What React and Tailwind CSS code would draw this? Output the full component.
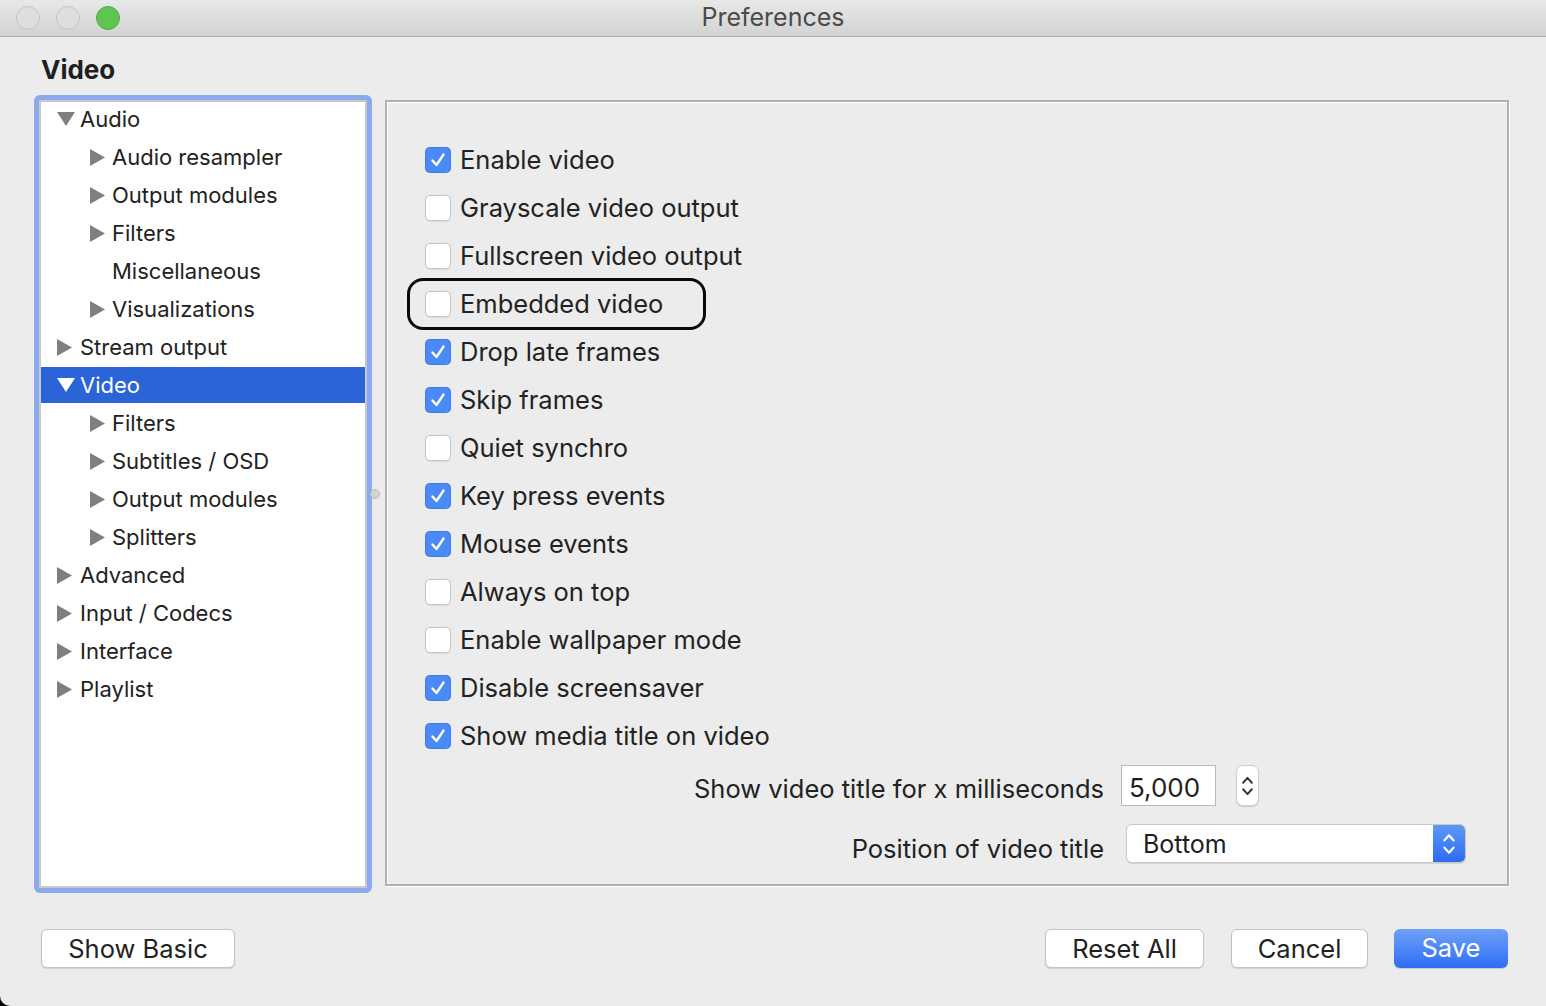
import React from 'react';

const treeItems = [
  { label: 'Audio', level: 0, arrow: 'down' },
  { label: 'Audio resampler', level: 1, arrow: 'right' },
  { label: 'Output modules', level: 1, arrow: 'right' },
  { label: 'Filters', level: 1, arrow: 'right' },
  { label: 'Miscellaneous', level: 1, arrow: null },
  { label: 'Visualizations', level: 1, arrow: 'right' },
  { label: 'Stream output', level: 0, arrow: 'right' },
  { label: 'Video', level: 0, arrow: 'down', selected: true },
  { label: 'Filters', level: 1, arrow: 'right' },
  { label: 'Subtitles / OSD', level: 1, arrow: 'right' },
  { label: 'Output modules', level: 1, arrow: 'right' },
  { label: 'Splitters', level: 1, arrow: 'right' },
  { label: 'Advanced', level: 0, arrow: 'right' },
  { label: 'Input / Codecs', level: 0, arrow: 'right' },
  { label: 'Interface', level: 0, arrow: 'right' },
  { label: 'Playlist', level: 0, arrow: 'right' },
];

const options = [
  { label: 'Enable video', checked: true },
  { label: 'Grayscale video output', checked: false },
  { label: 'Fullscreen video output', checked: false },
  { label: 'Embedded video', checked: false, highlight: true },
  { label: 'Drop late frames', checked: true },
  { label: 'Skip frames', checked: true },
  { label: 'Quiet synchro', checked: false },
  { label: 'Key press events', checked: true },
  { label: 'Mouse events', checked: true },
  { label: 'Always on top', checked: false },
  { label: 'Enable wallpaper mode', checked: false },
  { label: 'Disable screensaver', checked: true },
  { label: 'Show media title on video', checked: true },
];

function Arrow({ dir, selected }) {
  const fill = selected ? '#ffffff' : '#7f7f7f';
  if (dir === 'down') {
    return (
      <svg width="18" height="14" viewBox="0 0 18 14" className="shrink-0">
        <polygon points="0,0 18,0 9,14" fill={fill} />
      </svg>
    );
  }
  return (
    <svg width="15" height="17" viewBox="0 0 15 17" className="shrink-0">
      <polygon points="0,0 15,8.5 0,17" fill={fill} />
    </svg>
  );
}

function Checkbox({ checked }) {
  if (checked) {
    return (
      <div className="w-[26px] h-[26px] rounded-[5px] bg-[#4a8af6] flex items-center justify-center shrink-0 shadow-[inset_0_0_0_1px_rgba(40,100,230,0.35)]">
        <svg width="18" height="18" viewBox="0 0 18 18">
          <polyline points="3.5,9.5 7.5,14 14.5,3.5" fill="none" stroke="#ffffff" strokeWidth="2.4" strokeLinecap="round" strokeLinejoin="round" />
        </svg>
      </div>
    );
  }
  return <div className="w-[26px] h-[26px] rounded-[5px] bg-white border border-[#c6c6c6] shrink-0 shadow-[0_0.5px_1px_rgba(0,0,0,0.08)]" />;
}

function Chevrons({ color, w = 12, h = 24 }) {
  return (
    <svg width={w} height={h} viewBox="0 0 12 24">
      <polyline points="2,9 6,4.5 10,9" fill="none" stroke={color} strokeWidth="1.8" strokeLinecap="round" strokeLinejoin="round" />
      <polyline points="2,15 6,19.5 10,15" fill="none" stroke={color} strokeWidth="1.8" strokeLinecap="round" strokeLinejoin="round" />
    </svg>
  );
}

function PushButton({ children, className = '' }) {
  return (
    <button className={`h-[39px] rounded-[6px] bg-white border border-[#c3c3c3] shadow-[0_1px_1px_rgba(0,0,0,0.12)] text-[25.5px] text-[#222] ${className}`}>
      {children}
    </button>
  );
}

export default function App() {
  return (
    <div className="w-[1546px] h-[1006px] bg-black overflow-hidden" style={{ fontFamily: 'Inter, "Noto Sans", sans-serif' }}>
      <div className="w-full h-full bg-[#ececec] rounded-bl-[10px] flex flex-col">
        {/* title bar */}
        <div className="h-[37px] shrink-0 relative flex items-center bg-gradient-to-b from-[#e8e8e8] to-[#d3d3d3] border-b border-[#a9a9a9]">
          <div className="flex items-center gap-[16px] pl-[16px]">
            <div className="w-[24px] h-[24px] rounded-full bg-[#dedede] border border-[#c4c4c4]" />
            <div className="w-[24px] h-[24px] rounded-full bg-[#dedede] border border-[#c4c4c4]" />
            <div className="w-[24px] h-[24px] rounded-full bg-[#5ec552] border border-[#4fae44]" />
          </div>
          <div className="absolute inset-0 flex items-center justify-center text-[25px] text-[#4b4b4b] pointer-events-none">
            Preferences
          </div>
        </div>

        {/* heading */}
        <div className="mt-[17px] pl-[41px] h-[32px] leading-[32px] text-[26px] font-bold text-[#1f1f1f]">Video</div>

        {/* main */}
        <div className="flex mt-[9px] pl-[34px]">
          {/* tree */}
          <div className="w-[338px] h-[798px] p-[5px] bg-[#8aaaed] rounded-[6px] shrink-0">
            <div className="w-full h-full bg-white border-2 border-[#c8c8c8] flex flex-col gap-[2px] overflow-hidden">
              {treeItems.map((item, i) => (
                <div
                  key={i}
                  className={`h-[36px] shrink-0 flex items-center text-[22px] leading-none ${item.selected ? 'bg-[#2a64d7] text-white' : 'text-[#222]'} ${i === 0 ? '-mt-[1px]' : ''}`}
                >
                  <div className={`flex items-center ${item.level === 0 ? 'pl-[16px] w-[39px]' : 'pl-[49px] w-[71px]'} shrink-0`}>
                    {item.arrow && <Arrow dir={item.arrow} selected={item.selected} />}
                  </div>
                  <span>{item.label}</span>
                </div>
              ))}
            </div>
          </div>

          {/* splitter handle */}
          <div className="w-[13px] shrink-0 flex items-center">
            <div className="w-[10px] h-[10px] -ml-[2px] rounded-full bg-[#d4d4d4] border border-[#bdbdbd]" />
          </div>

          {/* options panel */}
          <div className="w-[1124px] h-[786px] mt-[5px] border-2 border-[#b1b1b1] shadow-[inset_1px_1px_0_#ffffff,1px_1px_0_#ffffff] overflow-hidden">
            <div className="pt-[34px] pl-[38px] flex flex-col">
              {options.map((opt, i) =>
                opt.highlight ? (
                  <div key={i} className="h-[52px] shrink-0 -my-[2px] -ml-[18px] pl-[15px] w-[299px] border-[3px] border-[#0a0a0a] rounded-[16px] flex items-center gap-[9px] text-[25.5px] text-[#222]">
                    <Checkbox checked={opt.checked} />
                    <span>{opt.label}</span>
                  </div>
                ) : (
                  <div key={i} className="h-[48px] shrink-0 flex items-center gap-[9px] text-[25.5px] text-[#222]">
                    <Checkbox checked={opt.checked} />
                    <span>{opt.label}</span>
                  </div>
                )
              )}
            </div>

            <div className="flex items-start mt-[5px]">
              <div className="w-[717px] text-right text-[25.5px] leading-[30px] text-[#222] pt-[9px]">Show video title for x milliseconds</div>
              <div className="ml-[17px] w-[95px] h-[41px] bg-white border border-[#b9b9b9] flex items-center pl-[7px] pt-[4px] text-[26px] text-[#1e1e1e]">5,000</div>
              <div className="ml-[20px] w-[23px] h-[41px] bg-white rounded-[7px] border border-[#cfcfcf] shadow-[0_1px_1px_rgba(0,0,0,0.15)] flex items-center justify-center">
                <Chevrons color="#333" w={13} h={28} />
              </div>
            </div>

            <div className="flex items-start mt-[18px]">
              <div className="w-[717px] text-right text-[25.5px] leading-[30px] text-[#222] pt-[10px]">Position of video title</div>
              <div className="ml-[22px] w-[340px] h-[39px] bg-white rounded-[6px] border border-[#c9c9c9] shadow-[0_1px_1px_rgba(0,0,0,0.12)] flex items-center overflow-hidden">
                <span className="flex-1 pl-[16px] pt-[3px] text-[25px] text-[#1e1e1e]">Bottom</span>
                <div className="w-[32px] h-full bg-gradient-to-b from-[#5f97f7] to-[#2c6bf4] flex items-center justify-center">
                  <Chevrons color="#ffffff" w={14} h={28} />
                </div>
              </div>
            </div>

            <div className="flex items-start mt-[20px]">
              <div className="w-[717px]" />
              <div className="ml-[17px] w-[95px] h-[41px] bg-white border border-[#b9b9b9]" />
              <div className="ml-[20px] w-[23px] h-[41px] bg-white rounded-[7px] border border-[#cfcfcf]" />
            </div>
          </div>
        </div>

        {/* bottom buttons */}
        <div className="flex items-center mt-[36px] pl-[41px] pr-[38px]">
          <PushButton className="w-[194px]">Show Basic</PushButton>
          <div className="flex-1" />
          <PushButton className="w-[159px]">Reset All</PushButton>
          <PushButton className="w-[137px] ml-[27px]">Cancel</PushButton>
          <button className="w-[114px] h-[39px] ml-[26px] rounded-[6px] bg-gradient-to-b from-[#6fa0f8] to-[#2e6cf5] shadow-[0_1px_1px_rgba(0,0,0,0.15)] text-[25.5px] text-white">
            Save
          </button>
        </div>
      </div>
    </div>
  );
}
